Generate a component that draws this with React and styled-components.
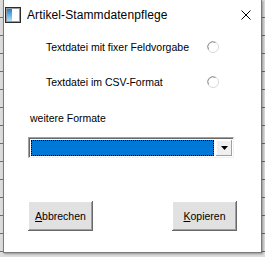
import React from "react";
import styled, { createGlobalStyle } from "styled-components";

const Global = createGlobalStyle`
  html, body {
    margin: 0;
    padding: 0;
    width: 265px;
    height: 257px;
    overflow: hidden;
  }
  body {
    background-color: #dcdcdc;
    background-image: repeating-linear-gradient(
      to bottom,
      transparent 0px,
      transparent 17px,
      #6e6e6e 17px,
      #6e6e6e 18px
    );
    font-family: "Liberation Sans", Arial, sans-serif;
  }
`;

const Window = styled.div`
  margin-left: 3px;
  width: 257px;
  height: 252px;
  background: #fff;
  border: 1px solid #7a7a7a;
  border-top: none;
  box-shadow: 1px 1px 2px rgba(0, 0, 0, 0.35);
  display: flex;
  flex-direction: column;
`;

const TitleBar = styled.div`
  height: 30px;
  display: flex;
  align-items: center;
  padding-left: 1px;
  padding-right: 10px;
  font-size: 12px;
  color: #000;
`;

const Title = styled.span`
  margin-left: 6px;
  flex: 1;
  letter-spacing: 0.1px;
`;

const Body = styled.div`
  display: flex;
  flex-direction: column;
  font-size: 10.5px;
  color: #000;
`;

const OptionRow = styled.div`
  display: grid;
  grid-template-columns: 161px 12px;
  align-items: center;
  height: 20px;
  padding-left: 42px;
  margin-top: ${(p) => p.$top}px;
`;

const Label = styled.div`
  height: 14px;
  line-height: 14px;
  padding-left: 26px;
  margin-top: 19px;
`;

const Combo = styled.div`
  margin: 12px 0 0 24px;
  width: 206px;
  height: 21px;
  box-sizing: border-box;
  border: 1px solid;
  border-color: #a0a0a0 #f0f0f0 #f0f0f0 #a0a0a0;
  box-shadow: inset 1px 1px 0 #696969;
  background: #fff;
  display: flex;
  padding: 2px 1px 1px 2px;
`;

const Selected = styled.div`
  flex: 1;
  background: #0078d7;
  outline: 1px dotted #000;
  outline-offset: -1px;
  border: 1px dotted #f0c87a;
`;

const DropButton = styled.div`
  width: 16px;
  margin-left: 2px;
  background: #f0f0f0;
  box-shadow: inset -1px -1px 0 #a0a0a0, inset 1px 1px 0 #fff;
  display: flex;
  align-items: center;
  justify-content: center;
`;

const Buttons = styled.div`
  display: flex;
  justify-content: space-between;
  margin: 43px 0 0 24px;
  width: 209px;
`;

const Button = styled.button`
  width: 65px;
  height: 30px;
  padding: 0;
  background: #e1e1e1;
  border: none;
  box-shadow: inset -1px -1px 0 #696969, inset 1px 1px 0 #fff,
    inset -2px -2px 0 #a0a0a0, inset 2px 2px 0 #e3e3e3;
  font-family: "Liberation Sans", Arial, sans-serif;
  font-size: 10.5px;
  color: #000;
  u {
    text-decoration: underline;
  }
`;

const WindowIcon = () => (
  <svg width="16" height="16" viewBox="0 0 16 16">
    <defs>
      <linearGradient id="ig" x1="0" y1="0" x2="0" y2="1">
        <stop offset="0" stopColor="#1f7fd0" />
        <stop offset="1" stopColor="#aee0f6" />
      </linearGradient>
    </defs>
    <rect x="0.5" y="0.5" width="15" height="15" fill="#fff" stroke="#2b2b2b" />
    <rect x="2" y="2" width="5" height="12" fill="url(#ig)" />
    <rect x="1.5" y="1.5" width="13" height="13" fill="none" stroke="#9a9a9a" />
  </svg>
);

const CloseIcon = () => (
  <svg width="10" height="10" viewBox="0 0 10 10">
    <path d="M0.5 0.5 L9.5 9.5 M9.5 0.5 L0.5 9.5" stroke="#000" strokeWidth="1" />
  </svg>
);

const Radio = () => (
  <svg width="12" height="12" viewBox="0 0 12 12">
    <circle cx="6" cy="6" r="5.5" fill="#fff" stroke="#d8d8d8" />
    <path d="M1.6 8.5 A5 5 0 0 1 8.5 1.6" fill="none" stroke="#8c8c8c" />
  </svg>
);

const Arrow = () => (
  <svg width="7" height="4" viewBox="0 0 7 4">
    <path d="M0 0 H7 L3.5 4 Z" fill="#000" />
  </svg>
);

export default function App() {
  return (
    <>
      <Global />
      <Window>
        <TitleBar>
          <WindowIcon />
          <Title>Artikel-Stammdatenpflege</Title>
          <CloseIcon />
        </TitleBar>
        <Body>
          <OptionRow $top={7}>
            <span>Textdatei mit fixer Feldvorgabe</span>
            <Radio />
          </OptionRow>
          <OptionRow $top={15}>
            <span>Textdatei im CSV-Format</span>
            <Radio />
          </OptionRow>
          <Label>weitere Formate</Label>
          <Combo>
            <Selected />
            <DropButton>
              <Arrow />
            </DropButton>
          </Combo>
          <Buttons>
            <Button>
              <u>A</u>bbrechen
            </Button>
            <Button>
              <u>K</u>opieren
            </Button>
          </Buttons>
        </Body>
      </Window>
    </>
  );
}
